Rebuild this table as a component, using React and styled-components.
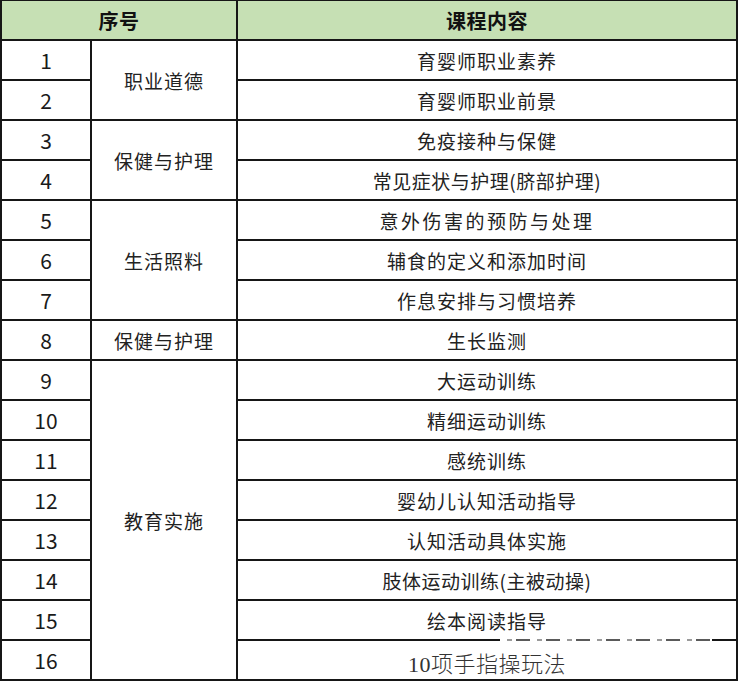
import React from 'react';
import styled, { createGlobalStyle } from 'styled-components';

const GlobalStyle = createGlobalStyle`
  html, body {
    margin: 0;
    padding: 0;
    height: 681px;
    overflow: hidden;
    background: #fff;
  }
  body {
    font-family: "Noto Sans CJK SC", "Noto Sans", sans-serif;
  }
`;

const Table = styled.div`
  width: 738px;
  box-sizing: border-box;
  display: grid;
  grid-template-columns: 88px 144px 498px;
  grid-auto-rows: 38px;
  gap: 2px;
  padding: 1px 2px 2px;
  background: #161616;
`;

const HeadCell = styled.div`
  grid-column: ${(p) => p.$span};
  background: #c6e0b4;
  display: flex;
  align-items: center;
  justify-content: center;
  font-size: 20px;
  font-weight: 700;
  color: #111;
  letter-spacing: 0.5px;
`;

const Cell = styled.div`
  position: relative;
  background: #fff;
  display: flex;
  align-items: center;
  justify-content: center;
  color: #222;
  font-size: 19px;
  letter-spacing: ${(p) => p.$spacing || '1px'};
`;

const NumCell = styled(Cell)`
  grid-column: 1;
  font-size: 21px;
  letter-spacing: 0;
  color: #1a1a1a;
`;

const GroupCell = styled(Cell)`
  grid-column: 2;
  grid-row: ${(p) => p.$rows};
`;

const ContentCell = styled(Cell)`
  grid-column: 3;
  font-family: ${(p) =>
    p.$serif
      ? '"Liberation Serif", "Noto Sans CJK SC", serif'
      : '"Noto Sans CJK SC", "Noto Sans", sans-serif'};
  color: ${(p) => (p.$serif ? '#333' : '#222')};
  ${(p) => p.$serif && 'font-size: 22px; letter-spacing: 0.5px; padding-top: 4px; font-weight: 300;'}

  /* the faint, broken rule left over on the scan */
  &::before {
    content: ${(p) => (p.$smudge ? "''" : 'none')};
    position: absolute;
    top: -2px;
    left: 262px;
    width: 212px;
    height: 2px;
    background: repeating-linear-gradient(
      90deg,
      #fff 0 7px,
      #9a9a9a 7px 12px,
      #fff 12px 16px,
      #5a5a5a 16px 30px
    );
  }
`;

const groups = [
  { name: '职业道德', from: 1, to: 2 },
  { name: '保健与护理', from: 3, to: 4 },
  { name: '生活照料', from: 5, to: 7 },
  { name: '保健与护理', from: 8, to: 8 },
  { name: '教育实施', from: 9, to: 16 },
];

const courses = [
  { text: '育婴师职业素养' },
  { text: '育婴师职业前景' },
  { text: '免疫接种与保健' },
  { text: '常见症状与护理(脐部护理)', spacing: '0.5px' },
  { text: '意外伤害的预防与处理', spacing: '2.5px' },
  { text: '辅食的定义和添加时间' },
  { text: '作息安排与习惯培养' },
  { text: '生长监测' },
  { text: '大运动训练' },
  { text: '精细运动训练' },
  { text: '感统训练' },
  { text: '婴幼儿认知活动指导' },
  { text: '认知活动具体实施' },
  { text: '肢体运动训练(主被动操)', spacing: '0.5px' },
  { text: '绘本阅读指导' },
  { text: '10项手指操玩法', serif: true, smudge: true },
];

export default function App() {
  return (
    <>
      <GlobalStyle />
      <Table>
        <HeadCell $span="1 / 3">序号</HeadCell>
        <HeadCell $span="3">课程内容</HeadCell>

        {courses.map((c, i) => (
          <React.Fragment key={i}>
            <NumCell style={{ gridRow: i + 2 }}>{i + 1}</NumCell>
            <ContentCell
              style={{ gridRow: i + 2 }}
              $spacing={c.spacing}
              $serif={c.serif}
              $smudge={c.smudge}
            >
              {c.text}
            </ContentCell>
          </React.Fragment>
        ))}

        {groups.map((g) => (
          <GroupCell key={g.from} $rows={`${g.from + 1} / ${g.to + 2}`}>
            {g.name}
          </GroupCell>
        ))}
      </Table>
    </>
  );
}
